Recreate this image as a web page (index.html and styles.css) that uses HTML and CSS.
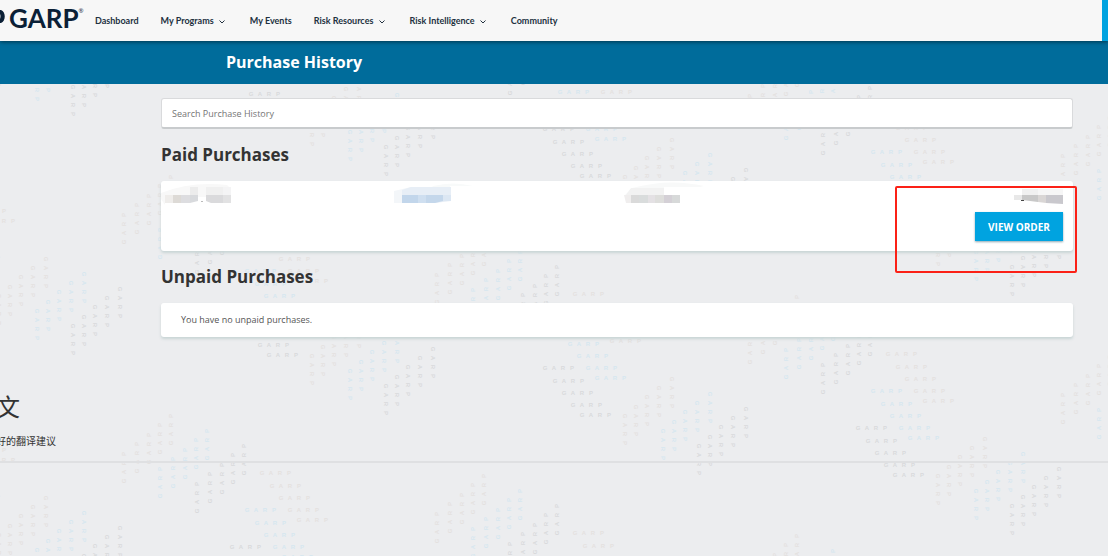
FILE: index.html
```html
<!DOCTYPE html>
<html lang="en">
<head>
<meta charset="utf-8">
<title>Purchase History</title>
<link rel="stylesheet" href="styles.css">
</head>
<body>
<svg class="backdrop" aria-hidden="true">
  <defs>
    <text id="word" x="0 9 18 27">GARP</text>
    <g id="down">
      <use href="#word" transform="translate(0 37) rotate(90)"/>
      <use href="#word" transform="translate(11 28) rotate(90)"/>
      <use href="#word" transform="translate(22 18) rotate(90)"/>
      <use href="#word" transform="translate(34 9) rotate(90)"/>
      <use href="#word" transform="translate(47 0) rotate(90)"/>
    </g>
    <g id="up">
      <use href="#word" transform="translate(0 38) rotate(-90)"/>
      <use href="#word" transform="translate(13 28) rotate(-90)"/>
      <use href="#word" transform="translate(25 19) rotate(-90)"/>
      <use href="#word" transform="translate(36 9) rotate(-90)"/>
      <use href="#word" transform="translate(47 0) rotate(-90)"/>
    </g>
    <g id="across">
      <use href="#word"/>
      <use href="#word" x="10" y="13"/>
      <use href="#word" x="19" y="25"/>
      <use href="#word" x="28" y="37"/>
      <use href="#word" x="37" y="47"/>
    </g>
    <g id="cell">
      <use class="sand" href="#down" x="-1" y="259"/>
      <use class="sky" href="#down" x="37" y="274"/>
      <use class="slate" href="#down" x="73" y="289"/>
      <use class="sand" href="#up" x="124" y="204"/>
      <use class="sky" href="#up" x="160" y="219"/>
      <use class="slate" href="#up" x="197" y="234"/>
      <use class="sand" href="#across" x="262" y="234"/>
      <use class="sky" href="#across" x="247" y="271"/>
      <use class="slate" href="#across" x="232" y="308"/>
    </g>
    <g id="strip">
      <use href="#cell" y="-717"/>
      <use href="#cell" y="-478"/>
      <use href="#cell" y="-239"/>
      <use href="#cell"/>
      <use href="#cell" y="239"/>
      <use href="#cell" y="478"/>
    </g>
  </defs>
  <use href="#strip" x="-313" y="-60"/>
  <use href="#strip"/>
  <use href="#strip" x="313" y="60"/>
  <use href="#strip" x="626" y="120"/>
  <use href="#strip" x="939" y="180"/>
  <use href="#strip" x="1252" y="240"/>
</svg>

<header class="topbar">
  <a class="logo" href="#" aria-label="GARP home">
    <svg class="logo-mark" viewBox="0 0 5 13" aria-hidden="true"><path d="M0 0H1C6 2 6 11 1 13H0V9Q1 6 0 4Z"/></svg>
    <span class="logo-name">GARP</span><sup class="logo-reg">®</sup>
  </a>
  <nav class="nav">
    <a href="#">Dashboard</a>
    <a href="#">My Programs <svg class="chevron" viewBox="0 0 6 4" aria-hidden="true"><path d="M0.500 0.500L3 3 5.500 0.500"/></svg></a>
    <a href="#">My Events</a>
    <a href="#">Risk Resources <svg class="chevron" viewBox="0 0 6 4" aria-hidden="true"><path d="M0.500 0.500L3 3 5.500 0.500"/></svg></a>
    <a href="#">Risk Intelligence <svg class="chevron" viewBox="0 0 6 4" aria-hidden="true"><path d="M0.500 0.500L3 3 5.500 0.500"/></svg></a>
    <a href="#">Community</a>
  </nav>
  <div class="topbar-edge"></div>
</header>

<div class="banner"><h1>Purchase History</h1></div>

<main class="content">
  <input class="search" type="search" aria-label="Search Purchase History" placeholder="Search Purchase History">

  <h2>Paid Purchases</h2>
  <section class="card order">
    <svg class="redacted" width="74" height="24" aria-hidden="true">
      <path fill="#f8f8f8" d="M0 12Q30 0 66 4L70 8V16H4L4 24L0 18Z"/>
      <path fill="#ececec" d="M29 6h8v8h-8z"/><path fill="#f0f0f0" d="M45 6h17v8H45z"/><path fill="#f4f4f5" d="M62 6h8v8h-8z"/>
      <path fill="#efedeb" d="M4 14h8v8H4z"/><path fill="#dddad6" d="M12 14h8v8h-8z"/><path fill="#dddde0" d="M20 14h9v8h-9z"/><path fill="#d8dadd" d="M29 14h8v6l-8 2z"/><path fill="#dadadc" d="M45 14h17v8H50l-5-2z"/><path fill="#e2e2e3" d="M62 14h8v8h-8z"/>
      <path fill="#bbb" d="M40 20h2v1h-2z"/>
    </svg>
    <svg class="redacted" width="80" height="24" aria-hidden="true">
      <path fill="#f8fafa" d="M40 5Q60 0 80 5H57V10H35Z"/>
      <path fill="#f3f6f9" d="M1 10L18 6V14H9V22H1Z"/><path fill="#e7eef6" d="M9 9L18 6H58V20L42 22H9Z"/>
      <path fill="#c2d6eb" d="M9 14h16v8H9z"/><path fill="#cfdff0" d="M25 14h8v8h-8z"/><path fill="#c4d7eb" d="M33 14h17v6l-8 2h-9z"/><path fill="#dce7f3" d="M50 14h8v6h-8z"/>
    </svg>
    <svg class="redacted" width="80" height="24" aria-hidden="true">
      <path fill="#f8f9f9" d="M8 7Q45-3 80 5L76 6H40V14H1Z"/>
      <path fill="#f2f2f2" d="M7 7h33v7H2z"/><path fill="#f0eeee" d="M0 14h7v8H2z"/>
      <path fill="#dadada" d="M7 14h8v8H7z"/><path fill="#d9dcdc" d="M15 14h9v8h-9z"/><path fill="#e4e1e4" d="M24 14h7v8h-7z"/><path fill="#dededc" d="M31 14h9v8h-9z"/><path fill="#d4d0d6" d="M40 14h8v8h-8z"/><path fill="#d7d9d9" d="M48 14h8v8h-8z"/>
    </svg>
    <div class="order-end">
      <svg class="redacted" width="50" height="24" aria-hidden="true">
        <path fill="#f0f0f0" d="M9 8h16v6H9z"/><path fill="#f6f6f6" d="M25 8h25v6H25z"/>
        <path fill="#e8e8e8" d="M1 14h8v5H1z"/><path fill="#c8c8c8" d="M9 14h16v7L9 19z"/><path fill="#d9d6d5" d="M25 14h8v8l-8-1z"/><path fill="#c9c8cd" d="M33 14h17v9L33 22z"/><path fill="#444" d="M8 19h3v1H8z"/>
      </svg>
      <button class="view-order" type="button">VIEW ORDER</button>
    </div>
    <div class="highlight"></div>
  </section>

  <h2>Unpaid Purchases</h2>
  <section class="card empty">You have no unpaid purchases.</section>
</main>

<aside class="translation" lang="zh-CN">
  <p class="translation-title">文</p>
  <p class="translation-note">好的翻译建议</p>
</aside>
</body>
</html>
```

FILE: styles.css
```css
* { box-sizing: border-box; }

body {
  margin: 0;
  min-height: 100vh;
  overflow: hidden;
  background: #ecedef;
  color: #333;
  font-family: "Open Sans", "Noto Sans CJK SC", sans-serif;
  font-size: 9px;
}

.backdrop {
  position: absolute;
  inset: 0;
  z-index: -1;
  width: 100%;
  height: 100%;
  font-family: "Liberation Sans", sans-serif;
  font-size: 6px;
  font-weight: 700;
  text-anchor: middle;
  dominant-baseline: central;
}
.sand { fill: #e4e1df; }
.sky { fill: #d6e7ef; }
.slate { fill: #d9dadc; }

.topbar {
  position: relative;
  display: flex;
  align-items: stretch;
  height: 41px;
  background: #f7f7f7;
  box-shadow: 0 1px 4px rgba(0, 0, 0, 0.5);
}
.logo {
  display: flex;
  width: 95px;
  color: #0b2036;
  text-decoration: none;
}
.logo-mark { width: 5px; height: 13px; margin: 10px 4px 0 0; fill: currentColor; }
.logo-name { font: 700 26px/36px Lato, sans-serif; }
.logo-reg { font-size: 6px; line-height: 22px; }
.nav { display: flex; gap: 22px; align-items: center; }
.nav a {
  color: #22313f;
  font-family: Lato, sans-serif;
  font-weight: 700;
  text-decoration: none;
  white-space: nowrap;
}
.chevron {
  width: 6px;
  height: 4px;
  margin: 0 3px 0 3px;
  fill: none;
  stroke: currentColor;
}
.topbar-edge { width: 6px; margin-left: auto; background: #00a3e0; }

.banner { padding: 0 226px; background: #006c9b; }
.banner h1 {
  margin: 0;
  color: #fff;
  font-size: 16px;
  font-weight: 700;
  line-height: 43px;
}

.content { padding: 14px 35px 0 161px; }
.search {
  display: block;
  width: 100%;
  height: 31px;
  padding: 0 10px;
  border: 1px solid #d9dadc;
  border-bottom: 2px solid #c8cbcd;
  border-radius: 3px;
  background: #fff;
  font: inherit;
}
.search::placeholder { color: #757575; }
h2 {
  margin: 0;
  padding: 13px 0;
  font-size: 17px;
  font-weight: 700;
  line-height: 26px;
}
.card {
  border-radius: 3px;
  background: #fff;
  box-shadow: 0 2px 3px #c8d4d5;
}
.order {
  position: relative;
  display: grid;
  grid-template-columns: 232px 231px 1fr auto;
  height: 70px;
}
.redacted { display: block; }
.order-end {
  display: flex;
  flex-direction: column;
  align-items: flex-end;
  gap: 7px;
  padding-right: 10px;
}
.view-order {
  width: 88px;
  height: 29px;
  padding: 0;
  border: 0;
  background: #00a3e0;
  box-shadow: 0 1px 2px #8ba7b3;
  color: #fff;
  font: inherit;
  font-size: 10px;
  font-weight: 700;
}
.highlight {
  position: absolute;
  top: 5px;
  right: -4px;
  width: 182px;
  height: 87px;
  border: 2px solid #fb2117;
  border-radius: 2px;
}
.empty { padding: 0 20px; color: #555; line-height: 34px; }

.translation {
  margin-top: 48px;
  padding-bottom: 10px;
  border-bottom: 2px solid #dfe0e2;
  font-family: "Noto Sans CJK SC", sans-serif;
}
.translation p { margin: 0 0 0 -4px; }
.translation-title { font-size: 24px; line-height: 42px; }
.translation .translation-note { margin-top: 4px; font-size: 10px; line-height: 20px; }
```
